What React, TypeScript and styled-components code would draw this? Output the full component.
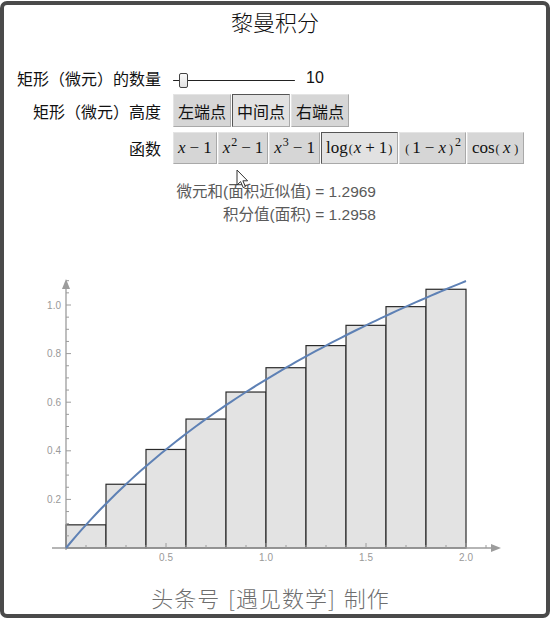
import React from 'react'
import styled, { createGlobalStyle } from 'styled-components'

const GlobalStyle = createGlobalStyle`
  html, body {
    margin: 0;
    padding: 0;
    background: #ffffff;
  }
  body {
    font-family: 'Liberation Sans', 'Noto Sans CJK SC', sans-serif;
  }
`

const Frame = styled.div`
  position: relative;
  box-sizing: border-box;
  width: 550px;
  height: 617px;
  margin-top: 1px;
  border: 4px solid #4a4a4a;
  border-radius: 7px;
  background: #ffffff;
  display: flex;
  flex-direction: column;
`

const Title = styled.div`
  margin-top: 3px;
  font-family: 'Noto Sans CJK SC', sans-serif;
  font-weight: 300;
  font-size: 22px;
  line-height: 26px;
  color: #111;
  text-align: center;
`

const Controls = styled.div`
  display: grid;
  grid-template-columns: 157px auto;
  grid-template-rows: 23px 33px 32px;
  column-gap: 12px;
  row-gap: 5px;
  align-items: center;
  margin-top: 32px;
`

const Label = styled.div`
  font-family: 'Noto Sans CJK SC', sans-serif;
  font-size: 16px;
  line-height: 20px;
  color: #111;
  text-align: right;
  white-space: nowrap;
`

const SliderRow = styled.div`
  display: flex;
  align-items: center;
  gap: 11px;
`

const SliderTrack = styled.div`
  position: relative;
  width: 122px;
  height: 16px;
  margin-top: 6px;
  &::before {
    content: '';
    position: absolute;
    left: 0;
    right: 0;
    top: 7px;
    height: 1.5px;
    background: #222;
    border-radius: 1px;
  }
`

const SliderThumb = styled.div`
  position: absolute;
  top: 0;
  width: 9px;
  height: 15px;
  box-sizing: border-box;
  border: 1px solid #444;
  border-radius: 2px;
  background: linear-gradient(#fbfbfb, #e2e2e2);
`

const SliderValue = styled.span`
  font-size: 16px;
  color: #111;
`

const ButtonBar = styled.div`
  display: flex;
  gap: 1px;
  align-items: stretch;
  height: 100%;
`

const SetterButton = styled.div<{ $pressed?: boolean; $math?: boolean }>`
  box-sizing: border-box;
  display: flex;
  align-items: center;
  justify-content: center;
  padding: 0 4px;
  background: ${({ $pressed }) => ($pressed ? '#e2e2e2' : '#d6d6d6')};
  border: 1px solid #a9a9a9;
  border-top-color: ${({ $pressed }) => ($pressed ? '#555' : '#e4e4e4')};
  border-left-color: ${({ $pressed }) => ($pressed ? '#555' : '#e4e4e4')};
  font-family: ${({ $math }) =>
    $math ? "'Liberation Serif', serif" : "'Noto Sans CJK SC', sans-serif"};
  font-size: ${({ $math }) => ($math ? '17px' : '16px')};
  color: #111;
  white-space: nowrap;
`

const MathText = styled.span`
  display: inline-block;
  line-height: 20px;
`

const Var = styled.i`
  font-style: italic;
`

const Sup = styled.sup`
  font-size: 12px;
  vertical-align: 7px;
  line-height: 0;
  padding-left: 1px;
`

const Paren = styled.span`
  font-size: 12px;
  padding: 0 1px;
`

const Space = styled.span<{ $w: number }>`
  display: inline-block;
  width: ${({ $w }) => $w}px;
`

const Op = styled.span`
  padding: 0 4px;
`

const Results = styled.div`
  width: 372px;
  margin-top: 16px;
  text-align: right;
  font-size: 15.5px;
  line-height: 23px;
  color: #5a5a5a;
`

const ResultLine = styled.div`
  font-family: 'Liberation Sans', 'Noto Sans CJK SC', sans-serif;
`

const Chart = styled.svg`
  display: block;
  margin-top: 43px;
`

const Footer = styled.div`
  margin-top: 5px;
  padding-right: 9px;
  text-align: center;
  font-family: 'Noto Sans CJK SC', sans-serif;
  font-weight: 300;
  font-size: 22px;
  letter-spacing: 1px;
  word-spacing: 2px;
  line-height: 30px;
  color: #6e6e6e;
`

const Cursor = styled.svg`
  position: absolute;
  left: 232px;
  top: 164px;
`

// plot mapping (page coordinates, the svg viewBox uses the same ones)
const X = (v: number) => 66 + 200 * v
const Y = (v: number) => 549 - 243 * v
const f = (x: number) => Math.log(1 + x)

const n = 10
const dx = 2 / n
const rects = Array.from({ length: n }, (_, i) => {
  const x0 = i * dx
  const h = f(x0 + dx / 2)
  return { x: X(x0), y: Y(h), w: 200 * dx, h: 243 * h }
})

const curve = Array.from({ length: 81 }, (_, i) => {
  const x = (i / 80) * 2
  return `${i === 0 ? 'M' : 'L'}${X(x).toFixed(2)},${Y(f(x)).toFixed(2)}`
}).join(' ')

const xTicks = Array.from({ length: 21 }, (_, i) => (i + 1) / 10)
const yTicks = Array.from({ length: 22 }, (_, i) => (i + 1) / 20)

const axisColor = '#9c9c9c'

const Plot = () => (
  <Chart width={542} height={308} viewBox="4 270 542 308">
    {rects.map((r, i) => (
      <rect
        key={i}
        x={r.x}
        y={r.y}
        width={r.w}
        height={r.h}
        fill="#e3e3e3"
        stroke="#2a2a2a"
        strokeWidth={1.2}
      />
    ))}
    <line x1={52} y1={549} x2={494} y2={549} stroke={axisColor} strokeWidth={1.3} />
    <polygon points="491,545 501,549 491,553" fill={axisColor} />
    <line x1={66} y1={551} x2={66} y2={288} stroke={axisColor} strokeWidth={1.3} />
    <polygon points="62,290 66,280 70,290" fill={axisColor} />
    {xTicks.map((v) => {
      const major = Math.abs(v * 2 - Math.round(v * 2)) < 1e-6
      return (
        <line
          key={v}
          x1={X(v)}
          x2={X(v)}
          y1={549}
          y2={549 - (major ? 5 : 3)}
          stroke={axisColor}
          strokeWidth={1}
        />
      )
    })}
    {yTicks.map((v) => {
      const major = Math.abs(v * 5 - Math.round(v * 5)) < 1e-6
      return (
        <line
          key={v}
          x1={66}
          x2={66 + (major ? 5 : 3)}
          y1={Y(v)}
          y2={Y(v)}
          stroke={axisColor}
          strokeWidth={1}
        />
      )
    })}
    {[0.5, 1, 1.5, 2].map((v) => (
      <text
        key={v}
        x={X(v)}
        y={562}
        fontSize={10}
        fill="#999"
        textAnchor="middle"
        fontFamily="'Liberation Sans', sans-serif"
      >
        {v.toFixed(1)}
      </text>
    ))}
    {[0.2, 0.4, 0.6, 0.8, 1].map((v) => (
      <text
        key={v}
        x={61}
        y={Y(v) + 3.5}
        fontSize={10}
        fill="#999"
        textAnchor="end"
        fontFamily="'Liberation Sans', sans-serif"
      >
        {v.toFixed(1)}
      </text>
    ))}
    <path d={curve} fill="none" stroke="#5e81b5" strokeWidth={2} />
  </Chart>
)

const App = () => {
  const count = 10
  const thumbLeft = 6

  return (
    <>
      <GlobalStyle />
      <Frame>
        <Title>黎曼积分</Title>
        <Controls>
          <Label>矩形（微元）的数量</Label>
          <SliderRow>
            <SliderTrack>
              <SliderThumb style={{ left: thumbLeft }} />
            </SliderTrack>
            <SliderValue>{count}</SliderValue>
          </SliderRow>

          <Label>矩形（微元）高度</Label>
          <ButtonBar>
            <SetterButton>左端点</SetterButton>
            <SetterButton $pressed>中间点</SetterButton>
            <SetterButton>右端点</SetterButton>
          </ButtonBar>

          <Label>函数</Label>
          <ButtonBar>
            <SetterButton $math>
              <MathText>
                <Var>x</Var>
                <Op>−</Op>1
              </MathText>
            </SetterButton>
            <SetterButton $math>
              <MathText>
                <Var>x</Var>
                <Sup>2</Sup>
                <Op>−</Op>1
              </MathText>
            </SetterButton>
            <SetterButton $math>
              <MathText>
                <Var>x</Var>
                <Sup>3</Sup>
                <Op>−</Op>1
              </MathText>
            </SetterButton>
            <SetterButton $math $pressed>
              <MathText>
                log<Paren>(</Paren>
                <Var>x</Var>
                <Op>+</Op>1<Paren>)</Paren>
              </MathText>
            </SetterButton>
            <SetterButton $math>
              <MathText>
                <Paren>(</Paren>
                <Space $w={2} />1<Op>−</Op>
                <Var>x</Var>
                <Space $w={2} />
                <Paren>)</Paren>
                <Sup>2</Sup>
              </MathText>
            </SetterButton>
            <SetterButton $math>
              <MathText>
                cos<Paren>(</Paren>
                <Space $w={2.5} />
                <Var>x</Var>
                <Space $w={2.5} />
                <Paren>)</Paren>
              </MathText>
            </SetterButton>
          </ButtonBar>
        </Controls>

        <Results>
          <ResultLine>微元和(面积近似值) = 1.2969</ResultLine>
          <ResultLine>积分值(面积) = 1.2958</ResultLine>
        </Results>

        <Plot />

        <Footer>头条号 [遇见数学] 制作</Footer>

        <Cursor width={13} height={20} viewBox="0 0 13 20">
          <path
            d="M1,1 L1,16 L4.6,12.6 L7.2,18.6 L9.4,17.7 L6.9,11.8 L11.6,11.8 Z"
            fill="#ffffff"
            stroke="#333"
            strokeWidth={1}
            strokeLinejoin="round"
          />
        </Cursor>
      </Frame>
    </>
  )
}

export default App
